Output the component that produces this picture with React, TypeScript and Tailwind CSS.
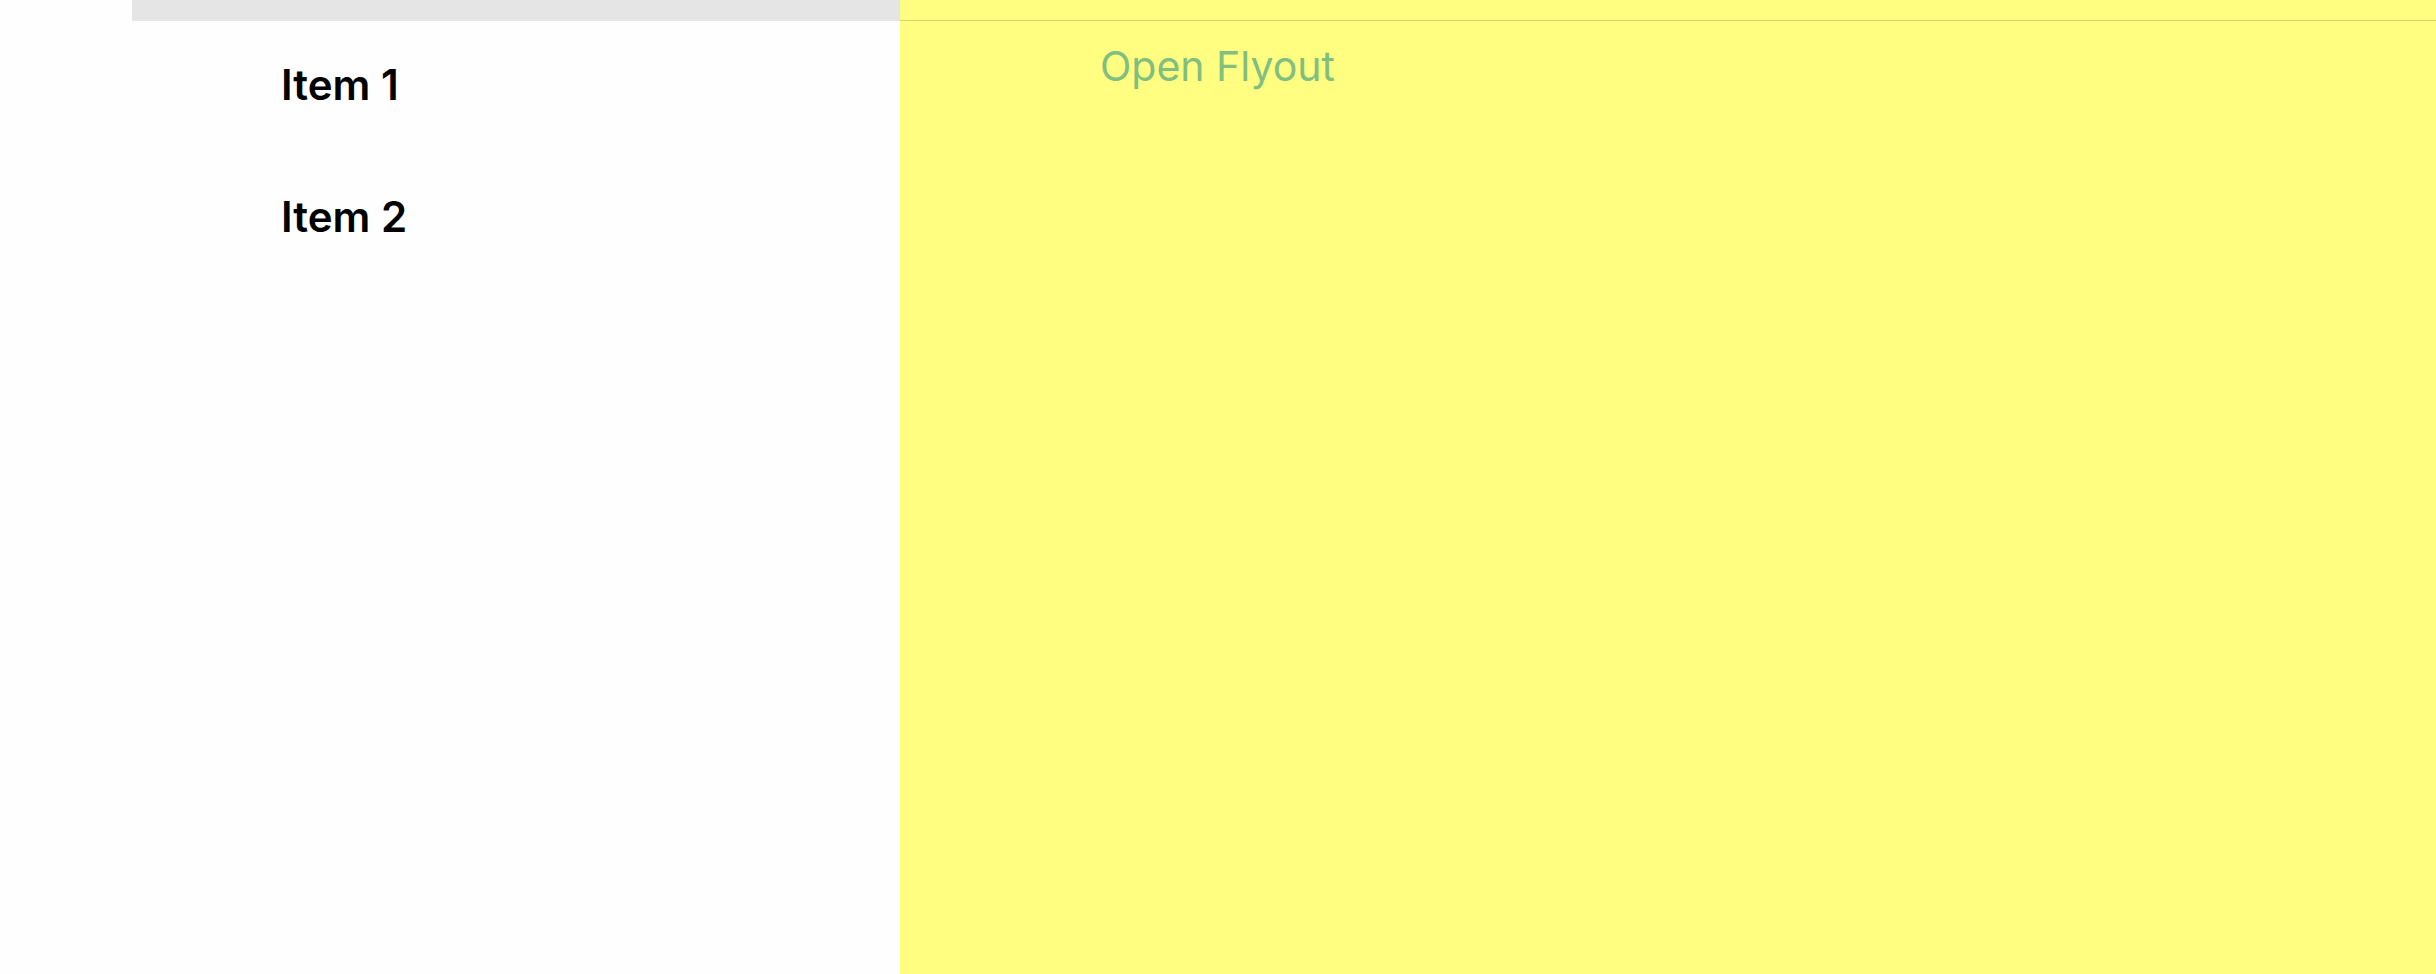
export default function App() {
    const items = ["Item 1", "Item 2"];

    return (
        <div className="flex h-[974px] w-full overflow-hidden bg-white font-['Inter',sans-serif]">
            {/* left side: header strip + menu list */}
            <div className="flex w-[900px] shrink-0 flex-col bg-[#fefefe]">
                <div className="ml-[132px] h-[21px] bg-[#e5e5e5]" />
                <ul className="flex flex-col gap-[82px] pl-[281px] pt-[39px]">
                    {items.map((item) => (
                        <li key={item} className="text-[42px] font-semibold leading-[50px] text-black">
                            {item}
                        </li>
                    ))}
                </ul>
            </div>

            {/* flyout panel */}
            <div className="flex flex-1 flex-col bg-[#fffe80]">
                <div className="h-[21px] border-b border-[#d9d76b]" />
                <div className="pl-[200px] pt-[21px]">
                    <button className="text-[41px] font-normal leading-[48px] text-[#80bf80]">Open Flyout</button>
                </div>
            </div>
        </div>
    );
}
